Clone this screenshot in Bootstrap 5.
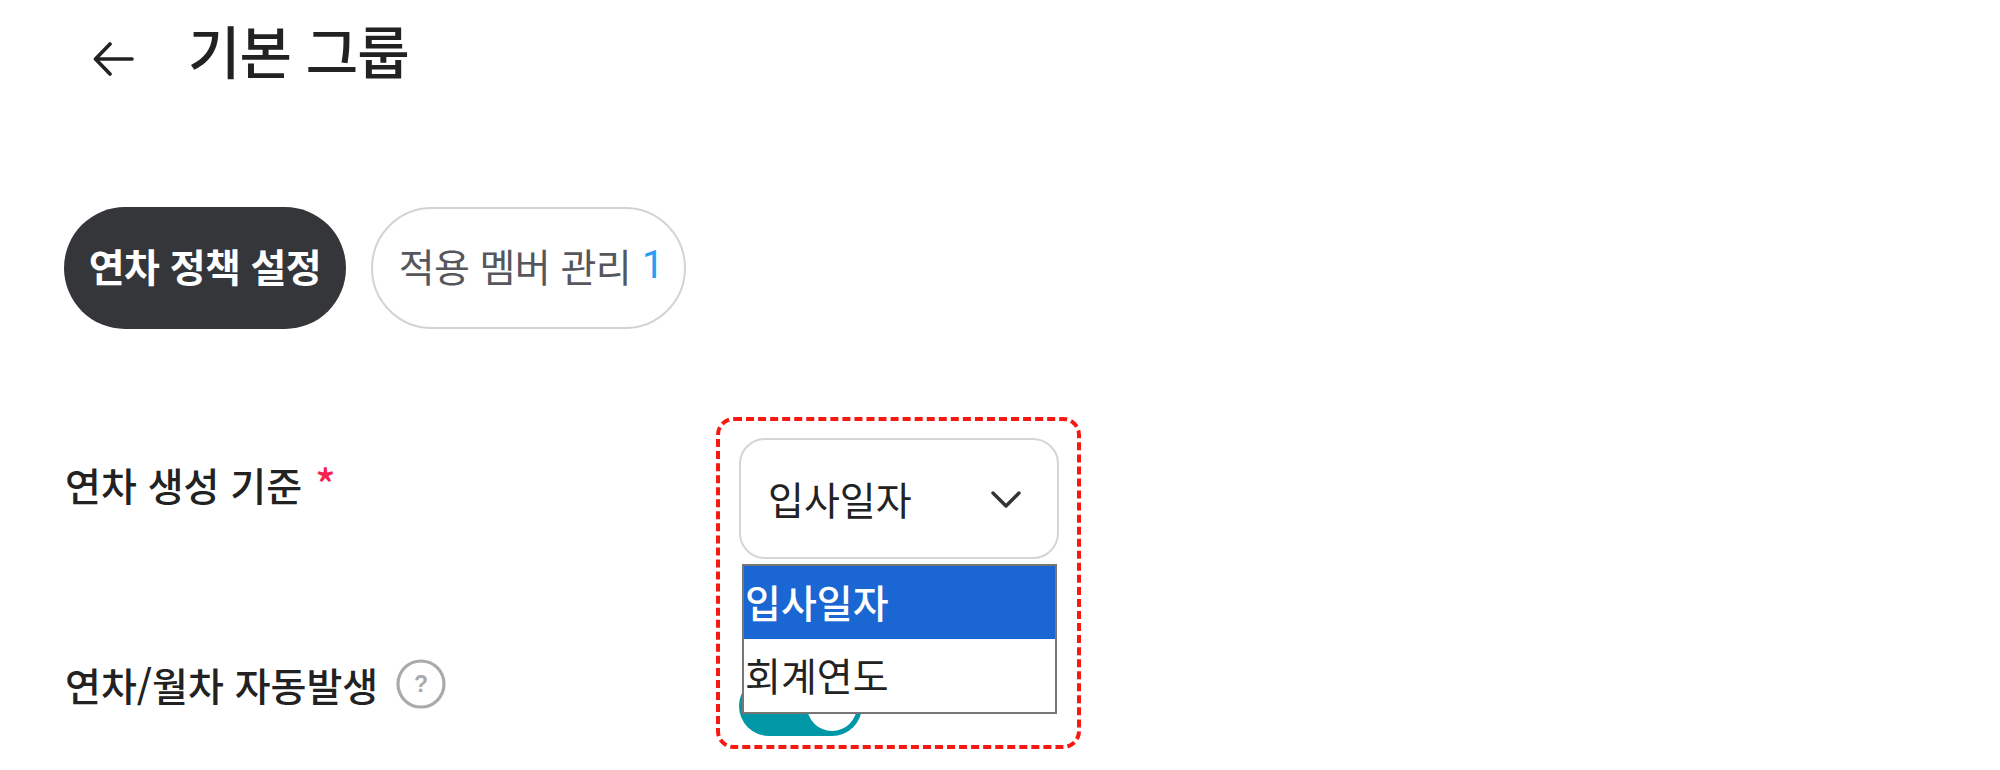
<!DOCTYPE html>
<html lang="ko">
<head>
<meta charset="utf-8">
<title>기본 그룹</title>
<link href="https://cdn.jsdelivr.net/npm/bootstrap@5.3.0/dist/css/bootstrap.min.css" rel="stylesheet">
<style>
html, body { height: 770px; overflow: hidden; }
body { background: #fff; color: #222; font-family: "Noto Sans CJK KR", "Noto Sans", sans-serif; font-size: 39px; line-height: 1.2; }
.page-wrap { padding: 24px 0 0 64px; width: 2000px; height: 770px; }
.head-row { height: 64px; }
.back-btn { width: 42px; margin-left: 29px; margin-right: 53px; margin-top: 6px; background: none; border: 0; padding: 0; line-height: 0; }
.page-title { font-size: 57px; font-weight: 500; margin: 0 0 14px; color: #222; letter-spacing: -1px; line-height: 58px; }
.tab-row { margin-top: 119px; gap: 25px; }
.tab-pill { height: 122px; border-radius: 61px; font-size: 39px; line-height: 1; padding: 0 0 6px; display: flex; align-items: center; justify-content: center; letter-spacing: -0.6px; }
.tab-on { width: 282px; background: #35363a; border: 0; color: #fff; font-weight: 700; }
.tab-off { width: 315px; padding-left: 5px; background: #fff; border: 2px solid #d2d3d6; color: #55575c; font-weight: 400; }
.tab-count { color: #2a9df4; margin-left: 11px; font-family: Roboto, sans-serif; }
.form-line { display: flex; }
.line-a { margin-top: 109px; height: 235px; }
.field-label { width: 675px; padding-left: 1px; font-weight: 500; color: #222; }
.line-a .field-label { padding-top: 23px; }
.req-mark { color: #f5224f; margin-left: 13px; font-size: 42px; line-height: 1; }
.line-b { height: 60px; margin-top: -19px; }
.line-b .field-label { display: flex; align-items: center; height: 60px; }
.field-box { position: relative; width: 320px; }
.fake-select { width: 320px; height: 121px; border: 2px solid #d4d5d8; border-radius: 26px; background: #fff; padding: 0 36px 0 27px; color: #222; }
.select-menu { position: absolute; left: 3px; top: 126px; width: 315px; height: 150px; z-index: 5; border: 2px solid #767676; border-radius: 0; padding: 0; margin: 0; background: #fff; min-width: 0; display: block; }
.select-menu .dropdown-item { height: 73px; padding: 0 0 0 1px; font-size: 39px; line-height: 70px; color: #222; }
.select-menu .dropdown-item.active { background: #1a66d2; color: #fff; font-weight: 500; }
.callout { position: absolute; left: -23px; top: -21px; width: 365px; height: 332px; border: 4px dashed #f5190f; border-radius: 18px; z-index: 6; pointer-events: none; }
.help-ico { margin-left: 18px; flex: none; }
.toggle-track { position: absolute; left: 0; top: 238px; width: 123px; height: 60px; border-radius: 30px; background: #0097a7; }
.toggle-knob { position: absolute; right: 5px; top: 5px; width: 50px; height: 50px; border-radius: 50%; background: #fff; }
</style>
</head>
<body>
<main class="page-wrap">
  <header class="head-row d-flex align-items-center">
    <button class="back-btn" type="button" aria-label="뒤로">
      <svg width="42" height="36" viewBox="0 0 42 36" fill="none" stroke="#222" stroke-width="3.6" stroke-linecap="round" stroke-linejoin="round"><path d="M39 18H3"/><path d="M17 3 2.5 18 17 33"/></svg>
    </button>
    <h1 class="page-title">기본 그룹</h1>
  </header>

  <nav class="tab-row d-flex">
    <button class="btn tab-pill tab-on" type="button">연차 정책 설정</button>
    <button class="btn tab-pill tab-off" type="button">적용 멤버 관리<span class="tab-count">1</span></button>
  </nav>

  <section class="form-line line-a">
    <div class="field-label">연차 생성 기준<span class="req-mark">*</span></div>
    <div class="field-box">
      <div class="fake-select d-flex align-items-center justify-content-between">
        <span>입사일자</span>
        <svg width="30" height="18" viewBox="0 0 30 18" fill="none" stroke="#333" stroke-width="3.4" stroke-linecap="round" stroke-linejoin="round"><path d="M2 3 15 16 28 3"/></svg>
      </div>
      <div class="toggle-track"><span class="toggle-knob"></span></div>
      <div class="dropdown-menu select-menu">
        <div class="dropdown-item active">입사일자</div>
        <div class="dropdown-item">회계연도</div>
      </div>
      <div class="callout"></div>
    </div>
  </section>

  <section class="form-line line-b">
    <div class="field-label">연차/월차 자동발생
      <svg class="help-ico" width="50" height="50" viewBox="0 0 50 50" fill="none"><circle cx="25" cy="25" r="23" stroke="#aaa" stroke-width="3.2"/><text x="25" y="33" font-size="23" font-weight="700" text-anchor="middle" fill="#aaa" font-family="Liberation Sans, sans-serif">?</text></svg>
    </div>
  </section>
</main>
</body>
</html>
